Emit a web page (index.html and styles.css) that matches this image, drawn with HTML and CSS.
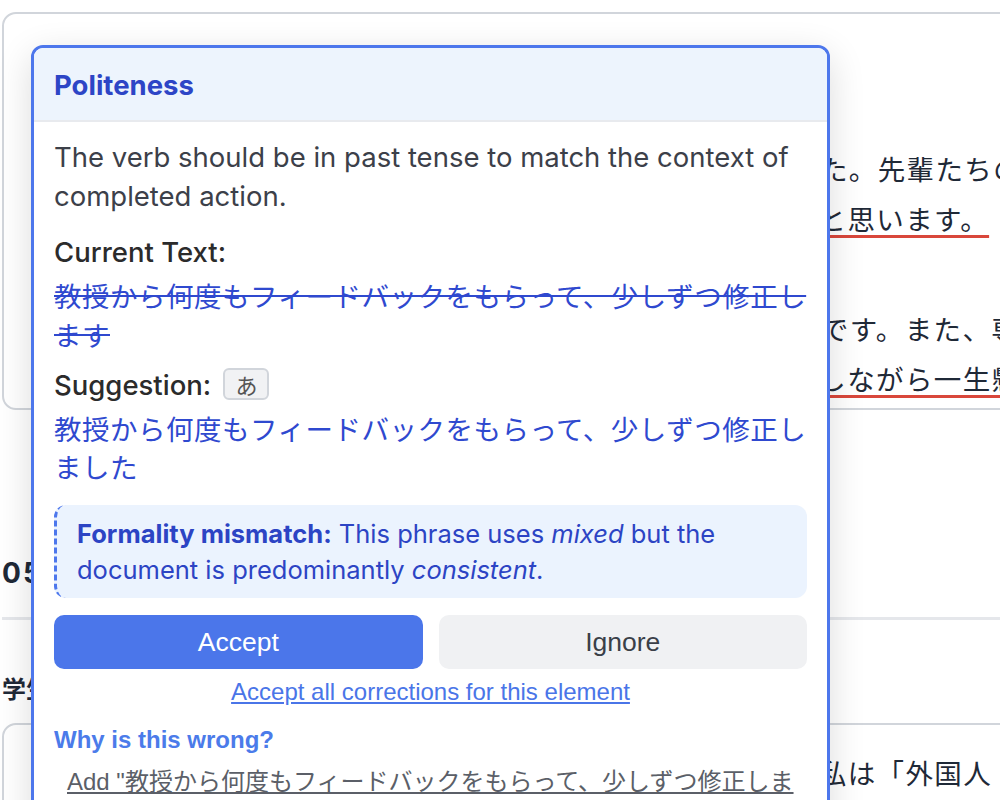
FILE: index.html
```html
<!DOCTYPE html>
<html lang="ja">
<head>
  <meta charset="UTF-8">
  <meta name="viewport" content="width=device-width, initial-scale=1.0">
  <link rel="stylesheet" href="styles.css">
  <title>Essay Review</title>
</head>
<body>

<div class="doc">
  <section class="card essay">
    <h2 class="card-title">第四章　一年間の研究を振り返って</h2>
    <p class="jp-body">この一年間、私は日本語の研究論文を書く練習をしてきました。先輩たちの論文を読んで<br>アドバイスを参考にして、<span class="flagged">これからも努力を続けていきたいと思います。</span></p>
    <p class="jp-body">研究で一番難しかったのは、正しい敬語の使い方を学ぶことです。また、専門用語も<br>教授から何度もフィードバックをもらって、毎日文章を修正<span class="flagged">しながら一生懸命書きました。</span></p>
  </section>

  <h2 class="section-title">05　今後の課題と目標</h2>
  <hr class="divider">

  <h3 class="field-title">学生コメント</h3>
  <section class="card comment">
    <p class="jp-body">来年、研究をもっと深めるために新しい課題に挑戦します。私は「外国人</p>
  </section>
</div>

<div class="popover">
  <div class="popover-header">
    <h3>Politeness</h3>
  </div>
  <div class="popover-body">
    <p class="message">The verb should be in past tense to match the context of completed action.</p>

    <div class="field">
      <div class="field-label">Current Text:</div>
      <div class="jp current">教授から何度もフィードバックをもらって、少しずつ修正します</div>
    </div>

    <div class="field">
      <div class="field-label">Suggestion: <span class="kana-badge">あ</span></div>
      <div class="jp suggestion">教授から何度もフィードバックをもらって、少しずつ修正しました</div>
    </div>

    <div class="note">
      <strong>Formality mismatch:</strong> This phrase uses <em>mixed</em> but the document is predominantly <em>consistent</em>.
    </div>

    <div class="actions">
      <button class="btn btn-accept">Accept</button>
      <button class="btn btn-ignore">Ignore</button>
    </div>
    <a class="accept-all" href="#">Accept all corrections for this element</a>

    <div class="why">Why is this wrong?</div>
    <a class="add-dict" href="#">Add "教授から何度もフィードバックをもらって、少しずつ修正します" to dictionary</a>
  </div>
</div>

</body>
</html>
```

FILE: styles.css
```css
body {
  margin: 0;
  background: #fff;
  font-family: Inter, "Noto Sans CJK JP", sans-serif;
  color: #1f2937;
  overflow: hidden;
  height: 800px;
}

/* document behind the popover */
.doc {
  width: 1400px;
  padding: 12px 0 0 2px;
}

.card {
  border: 2px solid #d1d5db;
  border-radius: 14px;
  padding: 28px 38px 5px;
}

.card-title {
  margin: 0 0 61px;
  font-size: 28px;
  line-height: 40px;
  font-weight: 700;
}

.jp-body {
  margin: 0;
  font-family: "Noto Sans CJK JP", sans-serif;
  font-size: 27.5px;
  line-height: 50px;
  letter-spacing: 0.05em;
  white-space: nowrap;
  color: #1f2937;
}

.jp-body + .jp-body {
  margin-top: 60px;
}

.flagged {
  text-decoration: underline 3px #d9473b;
  text-underline-offset: 5px;
}

.section-title {
  margin: 143px 0 0;
  font-size: 28px;
  line-height: 40px;
  font-weight: 700;
  letter-spacing: 2px;
}

.divider {
  margin: 24px 0 0;
  border: none;
  border-top: 3px solid #e5e7eb;
}

.field-title {
  margin: 50px 0 17px;
  font-family: "Noto Sans CJK JP", sans-serif;
  font-size: 24px;
  line-height: 36px;
  font-weight: 700;
}

.comment {
  padding: 22px 38px 30px;
}

/* correction popover */
.popover {
  position: absolute;
  left: 31px;
  top: 45px;
  width: 793px;
  height: 800px;
  border: 3px solid #4d77ec;
  border-radius: 12px;
  background: #fff;
  box-shadow: 0 10px 36px rgba(0, 0, 0, 0.14);
  overflow: hidden;
}

.popover-header {
  background: #edf4fd;
  border-bottom: 2px solid #e8eaee;
  padding: 21px 20px 19px;
}

.popover-header h3 {
  margin: 0;
  font-size: 27.5px;
  line-height: 32px;
  font-weight: 700;
  color: #2d45c6;
}

.popover-body {
  padding: 16px 20px;
}

.message {
  margin: 0 0 17px;
  font-size: 27.5px;
  line-height: 39px;
  color: #3c4049;
}

.field {
  margin-bottom: 12px;
}

.field-label {
  font-size: 27.5px;
  line-height: 39px;
  font-weight: 500;
  color: #2b2b2b;
  margin-bottom: 4px;
}

.kana-badge {
  display: inline-block;
  margin-left: 5px;
  padding: 0 10px;
  font-family: "Noto Sans CJK JP", sans-serif;
  font-size: 22px;
  line-height: 28px;
  font-weight: 400;
  color: #555;
  background: #f1f2f4;
  border: 2px solid #d1d5db;
  border-radius: 6px;
  vertical-align: 1px;
}

.jp {
  font-family: "Noto Sans CJK JP", sans-serif;
  font-size: 27.5px;
  line-height: 39px;
  letter-spacing: 0.5px;
  color: #2f49cf;
}

.jp.current {
  text-decoration: line-through 2px #2f49cf;
}

.jp.suggestion {
  line-height: 38px;
}

.note {
  margin-top: 20px;
  padding: 11px 20px 10px;
  border-left: 3px dashed #4d77ec;
  border-radius: 12px;
  background: #ebf3fe;
  font-size: 25.5px;
  line-height: 36px;
  color: #2c44c4;
}

.note strong {
  font-weight: 700;
}

.actions {
  display: grid;
  grid-template-columns: 1fr 1fr;
  gap: 16px;
  margin-top: 17px;
}

.btn {
  height: 54px;
  border: none;
  border-radius: 10px;
  font-family: "Liberation Sans", Arial, sans-serif;
  font-size: 26.5px;
  cursor: pointer;
}

.btn-accept {
  background: #4b76ea;
  color: #fff;
}

.btn-ignore {
  background: #f0f1f3;
  color: #3a3f48;
}

.accept-all {
  display: block;
  margin-top: 8px;
  text-align: center;
  font-family: "Liberation Sans", Arial, sans-serif;
  font-size: 24px;
  line-height: 30px;
  color: #4a75e8;
}

.why {
  margin-top: 18px;
  font-family: "Liberation Sans", Arial, sans-serif;
  font-size: 24px;
  line-height: 30px;
  font-weight: 700;
  color: #4b7bea;
}

.add-dict {
  display: block;
  margin-top: 12px;
  padding-left: 13px;
  font-family: "Liberation Sans", "Noto Sans CJK JP", sans-serif;
  font-size: 24px;
  line-height: 30px;
  color: #5b5f68;
}
```
